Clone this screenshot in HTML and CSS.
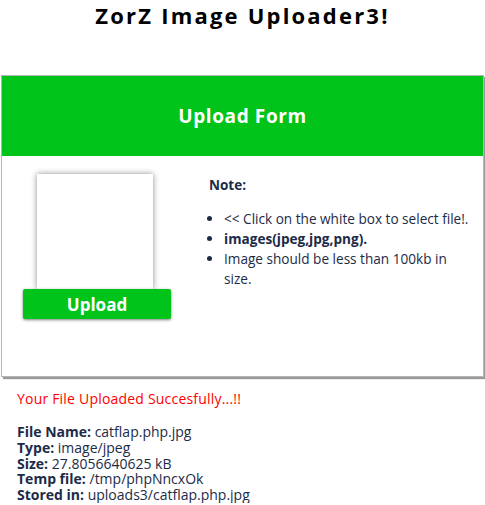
FILE: index.html
```html
<!DOCTYPE html>
<html>
<head>
<meta charset="utf-8">
<link rel="stylesheet" href="styles.css">
</head>
<body>
<h1 class="title">ZorZ Image Uploader3!</h1>
<div class="panel">
  <div class="panel-head">Upload Form</div>
  <div class="panel-body">
    <div class="uploader">
      <div class="drop-box"></div>
      <button class="upload-btn">Upload</button>
    </div>
    <div class="note">
      <div class="note-title">Note:</div>
      <ul class="note-list">
        <li>&lt;&lt; Click on the white box to select file!.</li>
        <li class="strong">images(jpeg,jpg,png).</li>
        <li>Image should be less than 100kb in size.</li>
      </ul>
    </div>
  </div>
</div>
<div class="result">
  <p class="success">Your File Uploaded Succesfully...!!</p>
  <div class="details">
    <div><b>File Name:</b> catflap.php.jpg</div>
    <div><b>Type:</b> image/jpeg</div>
    <div><b>Size:</b> 27.8056640625 kB</div>
    <div><b>Temp file:</b> /tmp/phpNncxOk</div>
    <div><b>Stored in:</b> uploads3/catflap.php.jpg</div>
  </div>
</div>
</body>
</html>
```
FILE: styles.css
```css
* { box-sizing: border-box; }
body {
  margin: 0;
  font-family: "Open Sans", "Noto Sans", sans-serif;
  color: #1c2b48;
  background: #fff;
}
.title {
  margin: 0;
  padding-top: 1px;
  text-align: center;
  font-size: 22px;
  font-weight: 700;
  color: #000;
  line-height: 28px;
  letter-spacing: 2.2px;
}
.panel {
  margin: 46px 1px 0 1px;
  border: 1px solid #b5b5b5;
  box-shadow: 2px 2px 1px #9a9a9a;
  height: 302px;
}
.panel-head {
  height: 80px;
  background: #00c41a;
  color: #fff;
  font-size: 19px;
  font-weight: 700;
  display: flex;
  align-items: center;
  justify-content: center;
  letter-spacing: 0.6px;
}
.panel-body {
  display: flex;
}
.uploader {
  width: 207px;
  padding: 18px 0 0 21px;
  display: flex;
  flex-direction: column;
}
.drop-box {
  width: 116px;
  height: 115px;
  margin-left: 14px;
  background: #fff;
  box-shadow: 0 0 6px rgba(0,0,0,0.45);
}
.upload-btn {
  width: 148px;
  height: 30px;
  border: none;
  border-radius: 2px;
  background: #00c41a;
  color: #fff;
  font-family: inherit;
  font-size: 17px;
  font-weight: 700;
  box-shadow: 0 1px 3px rgba(0,0,0,0.5);
  padding: 0;
}
.note {
  padding-top: 20px;
  font-size: 13.6px;
}
.note-title {
  font-weight: 700;
  font-size: 13.5px;
  margin-bottom: 15px;
}
.note-list {
  margin: 0;
  padding-left: 15px;
  line-height: 20px;
  width: 265px;
}
.note-list li.strong { font-weight: 700; }
.result {
  padding: 0 0 0 17px;
  font-size: 14px;
}
.success {
  color: #f00;
  margin: 12px 0 16px;
  letter-spacing: 0.2px;
}
.details {
  line-height: 15.75px;
}
```
